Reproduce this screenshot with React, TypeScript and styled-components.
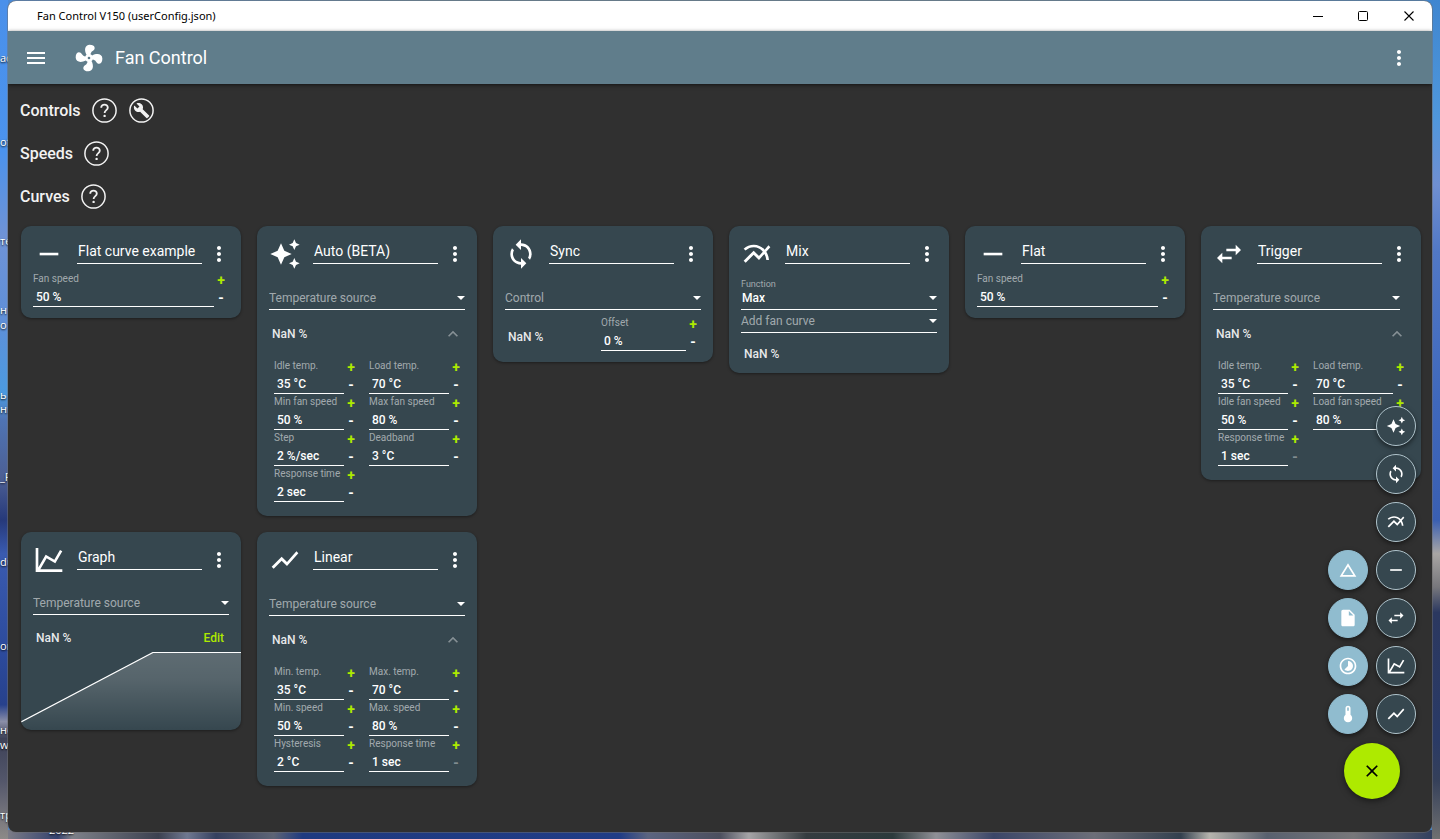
import React, { useId } from "react";
import styled, { createGlobalStyle } from "styled-components";
import {
  MdAutoAwesome,
  MdChangeHistory,
  MdClose,
  MdInsertDriveFile,
  MdKeyboardArrowUp,
  MdMenu,
  MdMoreVert,
  MdMultilineChart,
  MdRemove,
  MdShowChart,
  MdSwapHoriz,
  MdSync,
  MdTimelapse,
} from "react-icons/md";

const color = {
  surface: "#303030",
  bar: "#607d8b",
  card: "#36474f",
  accent: "#aeea00",
  add: "#90bccf",
  muted: "rgba(255, 255, 255, 0.54)",
};

const GlobalStyle = createGlobalStyle`
  * { box-sizing: border-box; }
  body {
    margin: 0;
    color: #fff;
    font-family: Roboto, "Liberation Sans", sans-serif;
    font-size: 12px;
  }
  button, input, select { font: inherit; color: inherit; }
  button {
    display: inline-flex;
    align-items: center;
    justify-content: center;
    padding: 0;
    border: 0;
    background: none;
    cursor: pointer;
  }
  h1, h2 { margin: 0; }
  svg { display: block; flex: none; }
`;

/* ---------- desktop and window ---------- */

const Desktop = styled.div`
  position: relative;
  display: flex;
  min-height: 100vh;
  padding: 1px 8px 7px;
  overflow: hidden;
  background:
    linear-gradient(#4a90ea 0, #4b93ee 18%, #6f93d6 28%, #5f8fd8 38%, #4b9ae0 47%, #4f74b4 50%, #4c5f94 57%,
      #26397a 62%, #3a5bb0 66%, #2c4a9c 78%, #27418c 84%, #8a8ea8 86%, #3d4258 88%, #53566a 93%, #8d8a88 100%)
      left / 8px 100% no-repeat,
    linear-gradient(#3f86d0 0, #4f97dc 14%, #6f8fd2 22%, #5178c6 30%, #3f68bc 48%, #3a5fb2 62%, #a9a6a4 66%,
      #77777c 70%, #2b3860 73%, #2a3a66 88%, #35405a 93%, #707070 100%)
      right / 8px 100% no-repeat,
    linear-gradient(90deg, #86848a 0, #34426e 4%, #7d8088 5%, #3c4150 11%, #6f7890 13%, #35405f 15%, #5d6475 19%,
      #1f3a80 21%, #203c86 43%, #5b6480 45%, #4c4f5e 50%, #a5a4a6 52%, #353c40 56%, #2c3a3c 62%, #8f9096 65%,
      #3b4668 69%, #6c6e78 76%, #33404e 82%, #b5b3ac 84%, #58606e 88%, #77777a 94%, #2b3a5c 100%)
      bottom / 100% 9px no-repeat,
    linear-gradient(90deg, #4a8ad8, #5f86a4 30%, #5f86a4 70%, #3f86d0);
`;

/* Shortcut captions lie on the free desktop, partly behind the window. */
const ShortcutCaption = styled.span<{ $top: number; $left?: number }>`
  position: absolute;
  top: ${(p) => p.$top}px;
  left: ${(p) => p.$left ?? 0}px;
  font: 11px/14px "Open Sans", "Noto Sans", sans-serif;
  white-space: nowrap;
  text-shadow: 0 1px 2px #000;
`;

const AppWindow = styled.div`
  position: relative;
  display: flex;
  flex: 1;
  flex-direction: column;
  min-width: 0;
  overflow: hidden;
  border-radius: 8px;
  background: ${color.surface};
  box-shadow: 0 0 0 1px rgba(110, 110, 110, 0.5);
`;

const TitleBar = styled.div`
  display: flex;
  align-items: center;
  height: 30px;
  padding-left: 29px;
  background: #fff;
  color: #000;
  font: 11px/16px "Noto Sans", "Open Sans", sans-serif;
`;

const WindowTitle = styled.span`
  flex: 1;
`;

const WindowButton = styled.button`
  width: 46px;
  height: 30px;
`;

const AppBar = styled.header`
  display: flex;
  align-items: center;
  height: 53px;
  padding: 0 21px 0 16px;
  background: ${color.bar};
  box-shadow: 0 1px 4px rgba(0, 0, 0, 0.6);
`;

const Brand = styled.div`
  display: flex;
  flex: 1;
  align-items: center;
  gap: 10px;
  margin-left: 25px;
`;

const AppName = styled.h1`
  font-size: 18px;
  font-weight: 400;
  line-height: 24px;
`;

const Content = styled.main`
  padding: 5px 11px 46px 12px;
`;

const SectionHead = styled.div`
  display: flex;
  align-items: center;
  gap: 12px;
  height: 43px;
`;

const SectionTitle = styled.h2`
  margin-right: -1px;
  color: #f2f2f2;
  font-size: 16px;
  font-weight: 500;
  line-height: 24px;
`;

/* ---------- cards ---------- */

const CardList = styled.div`
  display: flex;
  flex-wrap: wrap;
  align-items: flex-start;
  gap: 16px;
  padding: 8px 0 0 1px;
`;

const CardBox = styled.article<{ $bottom: number }>`
  width: 220px;
  padding-bottom: ${(p) => p.$bottom}px;
  overflow: hidden;
  border-radius: 10px;
  background: ${color.card};
  box-shadow: 0 1px 3px rgba(0, 0, 0, 0.4);
`;

const CardHead = styled.header`
  display: grid;
  grid-template-columns: 32px 1fr 24px;
  align-items: center;
  padding: 12px 10px 0 12px;
`;

const CardName = styled.input`
  align-self: start;
  min-width: 0;
  height: 24px;
  margin: 2px 5px 0 12px;
  padding: 0 1px 2px;
  border: 0;
  border-bottom: 1px solid #fff;
  border-radius: 0;
  outline: 0;
  background: none;
  font-size: 14px;
`;

const SelectBox = styled.div<{ $gap?: number; $end?: number }>`
  margin: ${(p) => p.$gap ?? 0}px ${(p) => p.$end ?? 12}px 0 12px;
`;

const SelectLabel = styled.label`
  display: block;
  margin-bottom: -2px;
  color: ${color.muted};
  font-size: 9px;
  line-height: 10px;
`;

const SelectLine = styled.div`
  display: grid;
  align-items: center;
  border-bottom: 1px solid #fff;

  & > * { grid-area: 1 / 1; }
  & > svg { justify-self: end; pointer-events: none; }
`;

const Select = styled.select<{ $empty: boolean }>`
  width: 100%;
  height: 22px;
  padding: 0 0 0 ${(p) => (p.$empty ? 0 : 1)}px;
  border: 0;
  outline: 0;
  appearance: none;
  background: none;
  color: ${(p) => (p.$empty ? color.muted : "#fff")};
  font-weight: ${(p) => (p.$empty ? 400 : 500)};

  option { color: #000; }
`;

const Reading = styled.span`
  color: rgba(255, 255, 255, 0.9);
  font-weight: 500;
  line-height: 16px;
`;

const ReadingRow = styled.div<{ $height: number; $gap?: number }>`
  display: flex;
  align-items: center;
  justify-content: space-between;
  height: ${(p) => p.$height}px;
  margin-top: ${(p) => p.$gap ?? 0}px;
  padding: 0 14px 0 15px;
`;

const CollapseButton = styled.button`
  color: rgba(255, 255, 255, 0.4);
`;

const EditButton = styled.button`
  padding: 4px 3px;
  color: ${color.accent};
  font-weight: 500;
`;

const FieldGrid = styled.div`
  display: grid;
  grid-template-columns: 84fr 94fr;
  column-gap: 11px;
  padding: 0 14px 0 17px;
`;

const SingleField = styled.div`
  padding: 1px 13px 0 12px;
`;

const OffsetRow = styled.div`
  display: grid;
  grid-template-columns: 93fr 99fr;
  align-items: end;
  padding: 5px 13px 0 15px;
`;

const OffsetReading = styled.div`
  display: flex;
  align-items: center;
  height: 28px;
`;

const FieldBox = styled.div`
  display: grid;
  grid-template-columns: minmax(0, 1fr) 14px;
  height: 36px;
`;

const FieldText = styled.div`
  padding-top: 1px;
  border-bottom: 1px solid #fff;
`;

const FieldLabel = styled.label`
  display: block;
  color: ${color.muted};
  font-size: 10px;
  line-height: 14px;
  white-space: nowrap;
`;

const FieldInput = styled.input`
  display: block;
  width: 100%;
  height: 20px;
  padding: 2px 3px 0;
  border: 0;
  outline: 0;
  background: none;
  font-weight: 500;
`;

const Stepper = styled.div`
  display: grid;
  grid-template-rows: 18px 17px;
`;

const StepButton = styled.button<{ $plus?: boolean }>`
  color: ${(p) => (p.$plus ? color.accent : "#fff")};
  font-size: 14px;
  font-weight: 700;
  line-height: 16px;

  &:disabled { color: rgba(255, 255, 255, 0.4); }
`;

const Chart = styled.svg`
  width: 100%;
  height: 78px;
`;

/* ---------- floating actions ---------- */

const Actions = styled.nav`
  position: absolute;
  right: 16px;
  bottom: 33px;
  display: grid;
  justify-items: center;
  gap: 9px;
`;

const ActionColumns = styled.div`
  display: flex;
  align-items: flex-end;
  gap: 8px;
`;

const ActionColumn = styled.div`
  display: grid;
  gap: 8px;
`;

const MiniAction = styled.button<{ $light?: boolean }>`
  width: 40px;
  height: 40px;
  border: 1px solid ${(p) => (p.$light ? color.add : "#b0c4cc")};
  border-radius: 50%;
  background: ${(p) => (p.$light ? color.add : color.card)};
  box-shadow: 0 2px 5px rgba(0, 0, 0, 0.5);
`;

const MainAction = styled.button`
  width: 56px;
  height: 56px;
  border-radius: 50%;
  background: ${color.accent};
  color: #000;
  box-shadow: 0 2px 6px rgba(0, 0, 0, 0.5);
`;

/* ---------- drawings ---------- */

const FanIcon = () => (
  <svg width="32" height="32" viewBox="0 0 24 24" fill="currentColor" aria-hidden>
    <path d="M12,11A1,1 0 0,0 11,12A1,1 0 0,0 12,13A1,1 0 0,0 13,12A1,1 0 0,0 12,11M12.5,2C17,2 17.11,5.57 14.75,6.75C13.76,7.24 13.32,8.29 13.13,9.22C13.61,9.42 14.03,9.73 14.35,10.13C18.05,8.13 22.03,8.92 22.03,12.5C22.03,17 18.46,17.1 17.28,14.73C16.78,13.74 15.72,13.3 14.79,13.11C14.59,13.59 14.28,14 13.88,14.34C15.87,18.03 15.08,22 11.5,22C7,22 6.91,18.42 9.27,17.24C10.25,16.75 10.69,15.71 10.89,14.79C10.4,14.59 9.97,14.27 9.65,13.87C5.96,15.85 2,15.07 2,11.5C2,7 5.56,6.89 6.74,9.26C7.24,10.25 8.29,10.68 9.22,10.87C9.41,10.39 9.73,9.97 10.14,9.65C8.15,5.96 8.94,2 12.5,2Z" />
  </svg>
);

const HelpIcon = () => (
  <svg width="25" height="25" viewBox="0 0 25 25" fill="none" stroke="#f2f2f2" strokeWidth="1.5" aria-hidden>
    <circle cx="12.5" cy="12.5" r="11.6" />
    <path d="M9.2 9.7a3.3 3.1 0 0 1 6.6 0c0 2.3-3.2 2.5-3.2 5.2" strokeWidth="1.8" />
    <circle cx="12.6" cy="17.9" r="1.2" fill="#f2f2f2" stroke="none" />
  </svg>
);

const WrenchIcon = () => (
  <svg width="25" height="25" viewBox="0 0 25 25" fill="none" stroke="#f2f2f2" strokeWidth="1.5" aria-hidden>
    <circle cx="12.5" cy="12.5" r="11.6" />
    <path
      transform="translate(4.2 4.2) scale(0.7)"
      fill="#f2f2f2"
      stroke="none"
      d="M22.7 19l-9.1-9.1c.9-2.3.4-5-1.5-6.9-2-2-5-2.4-7.4-1.3L9 6 6 9 1.6 4.7C.4 7.1.9 10.1 2.9 12.1c1.9 1.9 4.6 2.4 6.9 1.5l9.1 9.1c.4.4 1 .4 1.4 0l2.3-2.3c.5-.4.5-1.1.1-1.4z"
    />
  </svg>
);

const GraphIcon = ({ size }: { size: number }) => (
  <svg width={size} height={size} viewBox="0 0 24 24" fill="currentColor" aria-hidden>
    <path d="M16,11.78L20.24,4.45L21.97,5.45L16.74,14.5L10.23,10.75L5.46,19H22V21H2V3H4V17.54L9.5,8L16,11.78Z" />
  </svg>
);

const ThermometerIcon = () => (
  <svg width="20" height="20" viewBox="0 0 24 24" fill="currentColor" aria-hidden>
    <path d="M15 13V5A3 3 0 0 0 9 5V13A5 5 0 1 0 15 13M12 4A1 1 0 0 1 13 5V8H11V5A1 1 0 0 1 12 4Z" />
  </svg>
);

const CaretIcon = () => (
  <svg width="8" height="6" viewBox="0 0 8 6" fill="#fff" aria-hidden>
    <path d="M0 1h8L4 5z" />
  </svg>
);

/* ---------- composed parts ---------- */

type Param = { label: string; value: string; atMinimum?: boolean };

function Field({ label, value, atMinimum }: Param) {
  const id = useId();
  return (
    <FieldBox>
      <FieldText>
        <FieldLabel htmlFor={id}>{label}</FieldLabel>
        <FieldInput id={id} defaultValue={value} />
      </FieldText>
      <Stepper>
        <StepButton $plus aria-label={`Increase ${label}`}>+</StepButton>
        <StepButton disabled={atMinimum} aria-label={`Decrease ${label}`}>-</StepButton>
      </Stepper>
    </FieldBox>
  );
}

type PickerProps = { hint: string; value?: string; label?: string; gap?: number; end?: number };

function Picker({ hint, value, label, gap, end }: PickerProps) {
  const id = useId();
  return (
    <SelectBox $gap={gap} $end={end}>
      {label && <SelectLabel htmlFor={id}>{label}</SelectLabel>}
      <SelectLine>
        <Select id={id} $empty={!value} aria-label={label ? undefined : hint}>
          <option>{value ?? hint}</option>
        </Select>
        <CaretIcon />
      </SelectLine>
    </SelectBox>
  );
}

type CardProps = { name: string; icon: React.ReactNode; bottom?: number; children: React.ReactNode };

function Card({ name, icon, bottom = 14, children }: CardProps) {
  return (
    <CardBox $bottom={bottom}>
      <CardHead>
        {icon}
        <CardName defaultValue={name} aria-label="Curve name" />
        <button aria-label={`${name} options`}>
          <MdMoreVert size={24} />
        </button>
      </CardHead>
      {children}
    </CardBox>
  );
}

function FlatCard({ name }: { name: string }) {
  return (
    <Card name={name} icon={<MdRemove size={32} />} bottom={11}>
      <SingleField>
        <Field label="Fan speed" value="50 %" />
      </SingleField>
    </Card>
  );
}

type CurveCardProps = { name: string; icon: React.ReactNode; params: Param[]; end?: number };

function CurveCard({ name, icon, params, end }: CurveCardProps) {
  return (
    <Card name={name} icon={icon}>
      <Picker hint="Temperature source" gap={17} end={end} />
      <ReadingRow $height={48}>
        <Reading>NaN %</Reading>
        <CollapseButton aria-label="Collapse">
          <MdKeyboardArrowUp size={20} />
        </CollapseButton>
      </ReadingRow>
      <FieldGrid>
        {params.map((p) => (
          <Field key={p.label} {...p} />
        ))}
      </FieldGrid>
    </Card>
  );
}

const Section = ({ title, children }: { title: string; children?: React.ReactNode }) => (
  <SectionHead>
    <SectionTitle>{title}</SectionTitle>
    <button aria-label={`${title} help`}>
      <HelpIcon />
    </button>
    {children}
  </SectionHead>
);

const captions: [number, string][] = [
  [51, "ac"],
  [135, "of"],
  [234, "те"],
  [303, "н"],
  [318, "о"],
  [388, "ь"],
  [402, "ни"],
  [470, "_F"],
  [555, "du"],
  [639, "or"],
  [723, "но"],
  [738, "ws"],
  [808, "тр"],
];

const autoParams: Param[] = [
  { label: "Idle temp.", value: "35 °C" },
  { label: "Load temp.", value: "70 °C" },
  { label: "Min fan speed", value: "50 %" },
  { label: "Max fan speed", value: "80 %" },
  { label: "Step", value: "2 %/sec" },
  { label: "Deadband", value: "3 °C" },
  { label: "Response time", value: "2 sec" },
];

const triggerParams: Param[] = [
  { label: "Idle temp.", value: "35 °C" },
  { label: "Load temp.", value: "70 °C" },
  { label: "Idle fan speed", value: "50 %" },
  { label: "Load fan speed", value: "80 %" },
  { label: "Response time", value: "1 sec", atMinimum: true },
];

const linearParams: Param[] = [
  { label: "Min. temp.", value: "35 °C" },
  { label: "Max. temp.", value: "70 °C" },
  { label: "Min. speed", value: "50 %" },
  { label: "Max. speed", value: "80 %" },
  { label: "Hysteresis", value: "2 °C" },
  { label: "Response time", value: "1 sec", atMinimum: true },
];

const sensorActions: [string, React.ReactNode][] = [
  ["Add offset", <MdChangeHistory size={20} />],
  ["Add file sensor", <MdInsertDriveFile size={20} />],
  ["Add time average", <MdTimelapse size={20} />],
  ["Add temperature mix", <ThermometerIcon />],
];

const curveActions: [string, React.ReactNode][] = [
  ["Add auto curve", <MdAutoAwesome size={20} />],
  ["Add sync curve", <MdSync size={20} />],
  ["Add mix curve", <MdMultilineChart size={20} />],
  ["Add flat curve", <MdRemove size={20} />],
  ["Add trigger curve", <MdSwapHoriz size={20} />],
  ["Add graph curve", <GraphIcon size={20} />],
  ["Add linear curve", <MdShowChart size={20} />],
];

export default function App() {
  return (
    <Desktop>
      <GlobalStyle />
      {captions.map(([top, text]) => (
        <ShortcutCaption key={top} $top={top}>{text}</ShortcutCaption>
      ))}
      <ShortcutCaption $top={823} $left={49}>2022</ShortcutCaption>
      <AppWindow>
        <TitleBar>
          <WindowTitle>Fan Control V150 (userConfig.json)</WindowTitle>
          <WindowButton aria-label="Minimize">
            <svg width="11" height="11" stroke="#000" aria-hidden><path d="M1 5.5h10" /></svg>
          </WindowButton>
          <WindowButton aria-label="Maximize">
            <svg width="11" height="11" fill="none" stroke="#000" aria-hidden>
              <rect x="0.5" y="0.5" width="9" height="9" rx="1" />
            </svg>
          </WindowButton>
          <WindowButton aria-label="Close">
            <svg width="11" height="11" stroke="#000" strokeWidth="1.1" aria-hidden>
              <path d="M0.5 0.5l9 9M9.5 0.5l-9 9" />
            </svg>
          </WindowButton>
        </TitleBar>

        <AppBar>
          <button aria-label="Menu"><MdMenu size={24} /></button>
          <Brand>
            <FanIcon />
            <AppName>Fan Control</AppName>
          </Brand>
          <button aria-label="More"><MdMoreVert size={24} /></button>
        </AppBar>

        <Content>
          <Section title="Controls">
            <button aria-label="Assisted setup"><WrenchIcon /></button>
          </Section>
          <Section title="Speeds" />
          <Section title="Curves" />

          <CardList>
            <FlatCard name="Flat curve example" />
            <CurveCard name="Auto (BETA)" icon={<MdAutoAwesome size={32} />} params={autoParams} />
            <Card name="Sync" icon={<MdSync size={32} />} bottom={11}>
              <Picker hint="Control" gap={17} />
              <OffsetRow>
                <OffsetReading><Reading>NaN %</Reading></OffsetReading>
                <Field label="Offset" value="0 %" />
              </OffsetRow>
            </Card>
            <Card name="Mix" icon={<MdMultilineChart size={32} />} bottom={0}>
              <Picker label="Function" hint="Function" value="Max" gap={9} />
              <Picker hint="Add fan curve" />
              <ReadingRow $height={38} $gap={2}><Reading>NaN %</Reading></ReadingRow>
            </Card>
            <FlatCard name="Flat" />
            <CurveCard name="Trigger" icon={<MdSwapHoriz size={32} />} params={triggerParams} end={21} />
            <Card name="Graph" icon={<GraphIcon size={32} />} bottom={0}>
              <Picker hint="Temperature source" gap={16} />
              <ReadingRow $height={28} $gap={9}>
                <Reading>NaN %</Reading>
                <EditButton>Edit</EditButton>
              </ReadingRow>
              <Chart viewBox="0 0 220 78" preserveAspectRatio="none" aria-label="Fan curve">
                <defs>
                  <linearGradient id="curve-fill" x1="0" y1="0" x2="0" y2="1">
                    <stop offset="0" stopColor="#fff" stopOpacity="0.2" />
                    <stop offset="0.35" stopColor="#fff" stopOpacity="0.16" />
                    <stop offset="1" stopColor="#fff" stopOpacity="0" />
                  </linearGradient>
                </defs>
                <path d="M0 70L132 0.5H220V78H0z" fill="url(#curve-fill)" />
                <path d="M0 70L132 0.5H220" fill="none" stroke="#fff" strokeWidth="1.2" />
              </Chart>
            </Card>
            <CurveCard name="Linear" icon={<MdShowChart size={32} />} params={linearParams} />
          </CardList>
        </Content>

        <Actions aria-label="Add">
          <ActionColumns>
            <ActionColumn>
              {sensorActions.map(([label, icon]) => (
                <MiniAction key={label} $light aria-label={label}>{icon}</MiniAction>
              ))}
            </ActionColumn>
            <ActionColumn>
              {curveActions.map(([label, icon]) => (
                <MiniAction key={label} aria-label={label}>{icon}</MiniAction>
              ))}
            </ActionColumn>
          </ActionColumns>
          <MainAction aria-label="Close menu"><MdClose size={20} /></MainAction>
        </Actions>
      </AppWindow>
    </Desktop>
  );
}
